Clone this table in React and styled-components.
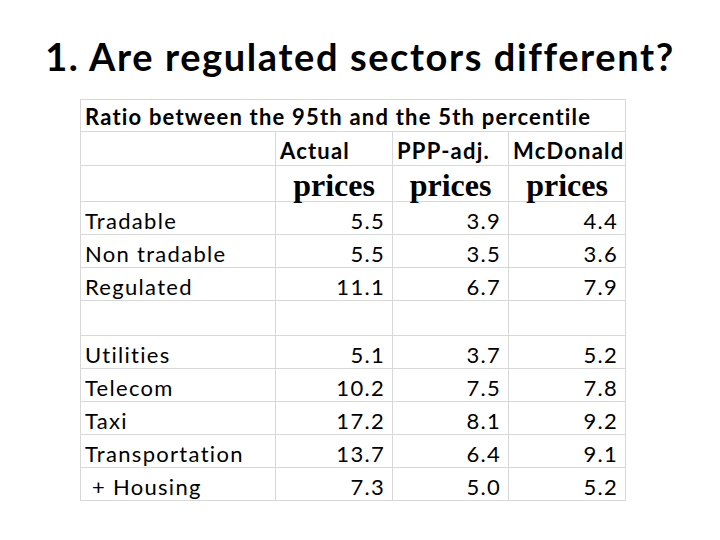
import React from "react";
import styled, { createGlobalStyle } from "styled-components";

const GlobalStyle = createGlobalStyle`
  html, body {
    margin: 0;
    padding: 0;
    background: #ffffff;
  }
  body {
    width: 720px;
    height: 540px;
    overflow: hidden;
  }
`;

const Slide = styled.div`
  display: flex;
  flex-direction: column;
  width: 720px;
  height: 540px;
`;

const Title = styled.h1`
  flex: 0 0 99px;
  margin: 0;
  padding-top: 33px;
  box-sizing: border-box;
  text-align: center;
  font-family: Lato, "Open Sans", sans-serif;
  font-weight: 700;
  font-size: 38px;
  line-height: 46px;
  letter-spacing: 1.6px;
  color: #000;
`;

const TableWrap = styled.div`
  padding-left: 80px;
`;

const Table = styled.table`
  border-collapse: collapse;
  table-layout: fixed;
  width: 546px;
  font-family: Lato, "Open Sans", sans-serif;
  color: #000;
`;

const Cell = styled.td`
  border: 1px solid #d8d8d8;
  height: ${({ $h }) => $h || 33}px;
  padding: ${({ $pt }) => ($pt ?? 5)}px ${({ $num }) => ($num ? "7px" : "4px")} 0 4px;
  text-align: ${({ $num }) => ($num ? "right" : "left")};
  font-size: 22px;
  letter-spacing: 1.3px;
  white-space: pre;
  overflow: visible;
  box-sizing: border-box;
  line-height: 1;
`;

const HeadCell = styled(Cell)`
  font-weight: 700;
  letter-spacing: 1.2px;
`;

const PriceCell = styled(Cell)`
  font-family: "Liberation Serif", "Times New Roman", serif;
  font-weight: 700;
  font-size: 32px;
  letter-spacing: 0;
  text-align: center;
`;

const top = [
  ["Tradable", "5.5", "3.9", "4.4"],
  ["Non tradable", "5.5", "3.5", "3.6"],
  ["Regulated", "11.1", "6.7", "7.9"],
];

const bottom = [
  ["Utilities", "5.1", "3.7", "5.2"],
  ["Telecom", "10.2", "7.5", "7.8"],
  ["Taxi", "17.2", "8.1", "9.2"],
  ["Transportation", "13.7", "6.4", "9.1"],
  [" + Housing", "7.3", "5.0", "5.2"],
];

const DataRow = ({ row }) => (
  <tr>
    <Cell>{row[0]}</Cell>
    <Cell $num>{row[1]}</Cell>
    <Cell $num>{row[2]}</Cell>
    <Cell $num>{row[3]}</Cell>
  </tr>
);

export default function App() {
  return (
    <>
      <GlobalStyle />
      <Slide>
        <Title>1. Are regulated sectors different?</Title>
        <TableWrap>
          <Table>
            <colgroup>
              <col style={{ width: 195 }} />
              <col style={{ width: 117 }} />
              <col style={{ width: 116 }} />
              <col style={{ width: 117 }} />
            </colgroup>
            <tbody>
              <tr>
                <HeadCell colSpan={4} $h={32} $pt={3}>
                  Ratio between the 95th and the 5th percentile
                </HeadCell>
              </tr>
              <tr>
                <HeadCell $h={34} $pt={4}></HeadCell>
                <HeadCell $h={34} $pt={4}>Actual</HeadCell>
                <HeadCell $h={34} $pt={4}>PPP-adj.</HeadCell>
                <HeadCell $h={34} $pt={4}>McDonald</HeadCell>
              </tr>
              <tr>
                <PriceCell $h={36} $pt={2}></PriceCell>
                <PriceCell $h={36} $pt={2}>prices</PriceCell>
                <PriceCell $h={36} $pt={2}>prices</PriceCell>
                <PriceCell $h={36} $pt={2}>prices</PriceCell>
              </tr>
              {top.map((r) => (
                <DataRow key={r[0]} row={r} />
              ))}
              <tr>
                <Cell $h={35}></Cell>
                <Cell $h={35}></Cell>
                <Cell $h={35}></Cell>
                <Cell $h={35}></Cell>
              </tr>
              {bottom.map((r) => (
                <DataRow key={r[0]} row={r} />
              ))}
            </tbody>
          </Table>
        </TableWrap>
      </Slide>
    </>
  );
}
